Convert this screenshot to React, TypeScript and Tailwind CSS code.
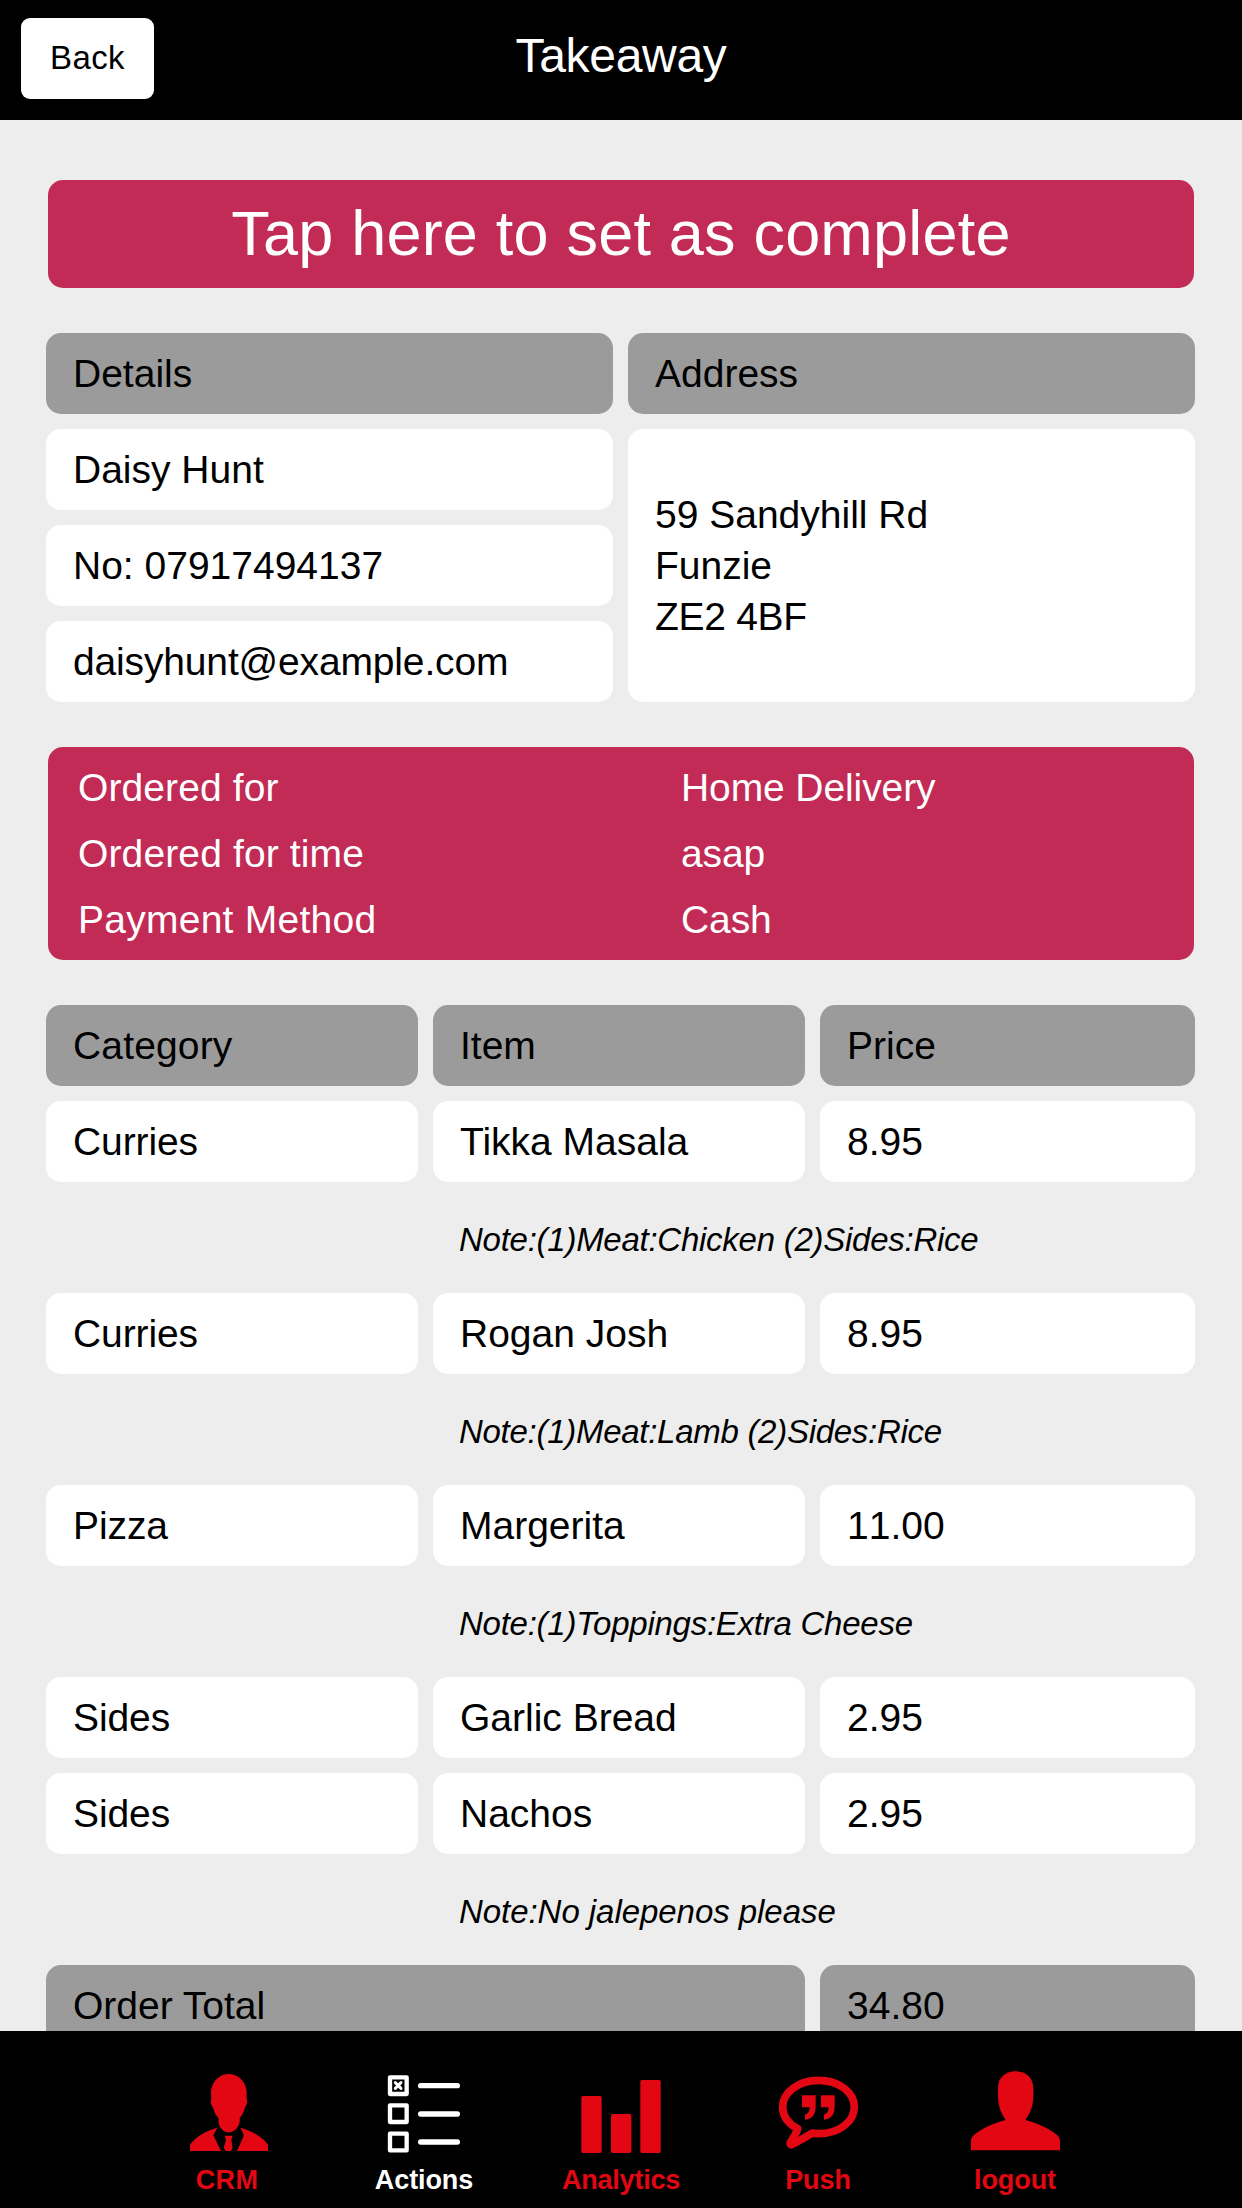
import React from 'react';

interface OrderLine {
  category: string;
  item: string;
  price: string;
  note?: string;
  noteClass?: string;
}

const orderLines: OrderLine[] = [
  { category: 'Curries', item: 'Tikka Masala', price: '8.95', note: 'Note:(1)Meat:Chicken (2)Sides:Rice', noteClass: 'tracking-[-0.26px]' },
  { category: 'Curries', item: 'Rogan Josh', price: '8.95', note: 'Note:(1)Meat:Lamb (2)Sides:Rice', noteClass: 'tracking-[-0.28px]' },
  { category: 'Pizza', item: 'Margerita', price: '11.00', note: 'Note:(1)Toppings:Extra Cheese', noteClass: 'tracking-[-0.25px]' },
  { category: 'Sides', item: 'Garlic Bread', price: '2.95' },
  { category: 'Sides', item: 'Nachos', price: '2.95', note: 'Note:No jalepenos please', noteClass: 'tracking-[-0.05px]' },
];

const orderInfo = [
  { label: 'Ordered for', value: 'Home Delivery', className: 'tracking-[0.1px]' },
  { label: 'Ordered for time', value: 'asap', className: 'tracking-[0.13px]' },
  { label: 'Payment Method', value: 'Cash', className: 'tracking-[0.25px]' },
];

interface CellProps {
  children: React.ReactNode;
  header?: boolean;
  className?: string;
}

const Cell: React.FC<CellProps> = ({ children, header, className = '' }) => {
  return (
    <div
      className={`flex items-center rounded-[15px] pl-[27px] ${header ? 'bg-[#9b9b9b]' : 'bg-white'} ${className}`}
    >
      {children}
    </div>
  );
};

const CrmIcon = () => (
  <svg width="96" height="92" viewBox="57 138 288 276" fill="currentColor">
    <path d="M206 162 C232 162 254 180 259 208 C261 220 259 230 260 237 C263 242 261 257 255 262 C252 276 247 286 239 294 C241 307 236 319 229 326 C222 333 214 337 206 337 C197 337 190 333 184 326 C177 318 174 307 176 295 C168 287 162 276 159 262 C153 257 151 244 154 237 C154 229 152 219 154 208 C159 180 181 162 206 162 Z" />
    <path d="M172 323 L160 346 L183 393 L90 393 L90 374 C108 350 139 331 172 323 Z" />
    <path d="M241 323 L252 346 L231 393 L324 393 L324 374 C306 350 274 331 241 323 Z" />
    <path d="M194 347 H218 L214 360 L218 384 L212 393 H197 L191 384 L198 360 Z" />
  </svg>
);

const ActionsIcon = () => (
  <svg width="96" height="92" viewBox="648 138 288 276" fill="none" stroke="currentColor">
    <g strokeWidth="13" strokeLinejoin="round">
      <rect x="690" y="172" width="50" height="50" />
      <rect x="690" y="256" width="50" height="50" />
      <rect x="690" y="341" width="50" height="50" />
    </g>
    <path d="M706 188 L723 205 M723 188 L706 205" strokeWidth="9" strokeLinecap="round" />
    <path d="M782 197 H892 M782 282 H892 M782 366 H892" strokeWidth="16" strokeLinecap="round" />
  </svg>
);

const AnalyticsIcon = () => (
  <svg width="96" height="92" viewBox="99 138 288 276" fill="currentColor">
    <rect x="124" y="228" width="61" height="171" rx="5" />
    <rect x="213" y="282" width="61" height="117" rx="5" />
    <rect x="301" y="180" width="61" height="219" rx="5" />
  </svg>
);

const PushIcon = () => (
  <svg width="96" height="92" viewBox="690 138 288 276" fill="currentColor">
    <path
      d="M836 181 C895 181 943 216 943 261 C943 306 895 341 836 341 C830 341 824 340 817 339 C799 350 776 364 757 373 C751 376 749 371 752 366 C761 351 770 340 773 326 C744 311 728 288 728 261 C728 216 777 181 836 181 Z"
      fill="none"
      stroke="currentColor"
      strokeWidth="23"
      strokeLinejoin="round"
    />
    <path d="M786 226 H827 V259 C827 283 817 298 795 299 V284 C805 281 809 274 809 262 H786 Z" />
    <path d="M843 226 H884 V259 C884 283 874 298 852 299 V284 C862 281 866 274 866 262 H843 Z" />
  </svg>
);

const LogoutIcon = () => (
  <svg width="96" height="92" viewBox="201 138 288 276" fill="currentColor">
    <path d="M346 154 C378 154 400 174 400 205 V225 C400 258 392 278 376 300 C411 308 452 328 472 346 C478 352 480 357 480 365 V391 H213 V365 C213 357 215 352 221 346 C241 328 281 308 317 300 C302 278 294 258 294 225 V205 C294 174 315 154 346 154 Z" />
  </svg>
);

const tabs = [
  { label: 'CRM', icon: <CrmIcon />, className: 'text-[#e30613]', text: 'tracking-[0.4px]' },
  { label: 'Actions', icon: <ActionsIcon />, className: 'text-white', text: 'tracking-[-0.1px]' },
  { label: 'Analytics', icon: <AnalyticsIcon />, className: 'text-[#e30613]', text: 'tracking-[-0.2px]' },
  { label: 'Push', icon: <PushIcon />, className: 'text-[#e30613]', text: 'tracking-[-0.1px]' },
  { label: 'logout', icon: <LogoutIcon />, className: 'text-[#e30613]', text: 'tracking-[-0.1px]' },
];

export default function App() {
  return (
    <div className="flex h-[2208px] w-[1242px] flex-col overflow-hidden bg-[#ededed] font-['Liberation_Sans',Arial,sans-serif] text-[39px] leading-[51px] text-black">
      <header className="grid h-[120px] shrink-0 grid-cols-[1fr_auto_1fr] items-start bg-black">
        <button className="ml-[21px] mt-[18px] h-[81px] w-[133px] rounded-[9px] bg-white pb-[2px] text-[33px] tracking-[0.4px]">
          Back
        </button>
        <h1 className="mt-[26px] text-[48px] leading-[60px] tracking-[-0.3px] text-white">Takeaway</h1>
      </header>

      <main className="min-h-0 flex-1 overflow-hidden pt-[60px]">
        <button className="mx-[48px] flex h-[108px] w-[1146px] items-center justify-center rounded-[15px] bg-[#c12b56] pb-[2px] text-[63px] tracking-[0.2px] text-white">
          Tap here to set as complete
        </button>

        <section className="ml-[46px] mt-[45px] grid w-[1149px] grid-cols-2 grid-rows-[repeat(4,81px)] gap-[15px]">
          <Cell header>Details</Cell>
          <Cell header>Address</Cell>
          <Cell>Daisy Hunt</Cell>
          <Cell className="row-span-3">
            <address className="not-italic">
              59 Sandyhill Rd
              <br />
              Funzie
              <br />
              <span className="tracking-[-0.3px]">ZE2 4BF</span>
            </address>
          </Cell>
          <Cell>No: 07917494137</Cell>
          <Cell className="tracking-[-0.15px]">daisyhunt@example.com</Cell>
        </section>

        <section className="mx-[48px] mt-[45px] flex h-[213px] flex-col justify-center rounded-[15px] bg-[#c12b56] pl-[30px] text-white">
          {orderInfo.map((info) => (
            <div key={info.label} className="grid h-[66px] grid-cols-[603px_1fr] items-center">
              <span className={info.className}>{info.label}</span>
              <span className="tracking-[-0.1px]">{info.value}</span>
            </div>
          ))}
        </section>

        <section className="ml-[46px] mt-[45px] grid w-[1149px] auto-rows-[81px] grid-cols-[372px_372px_375px] gap-[15px]">
          <Cell header className="tracking-[0.15px]">Category</Cell>
          <Cell header>Item</Cell>
          <Cell header>Price</Cell>
          {orderLines.map((line) => (
            <React.Fragment key={line.item}>
              <Cell className="tracking-[-0.1px]">{line.category}</Cell>
              <Cell>{line.item}</Cell>
              <Cell className="[font-kerning:none]">{line.price}</Cell>
              {line.note && (
                <p className={`col-span-2 col-start-2 flex items-center pl-[26px] pt-[3px] text-[33px] italic ${line.noteClass}`}>
                  {line.note}
                </p>
              )}
            </React.Fragment>
          ))}
          <Cell header className="col-span-2">Order Total</Cell>
          <Cell header>34.80</Cell>
        </section>
      </main>

      <nav className="flex h-[177px] shrink-0 justify-center bg-black pt-[35px]">
        {tabs.map((tab) => (
          <a key={tab.label} className={`flex w-[197px] flex-col items-center ${tab.className}`}>
            {tab.icon}
            <span className={`mt-[7px] text-[27px] font-bold leading-[30px] ${tab.text}`}>{tab.label}</span>
          </a>
        ))}
      </nav>
    </div>
  );
}
